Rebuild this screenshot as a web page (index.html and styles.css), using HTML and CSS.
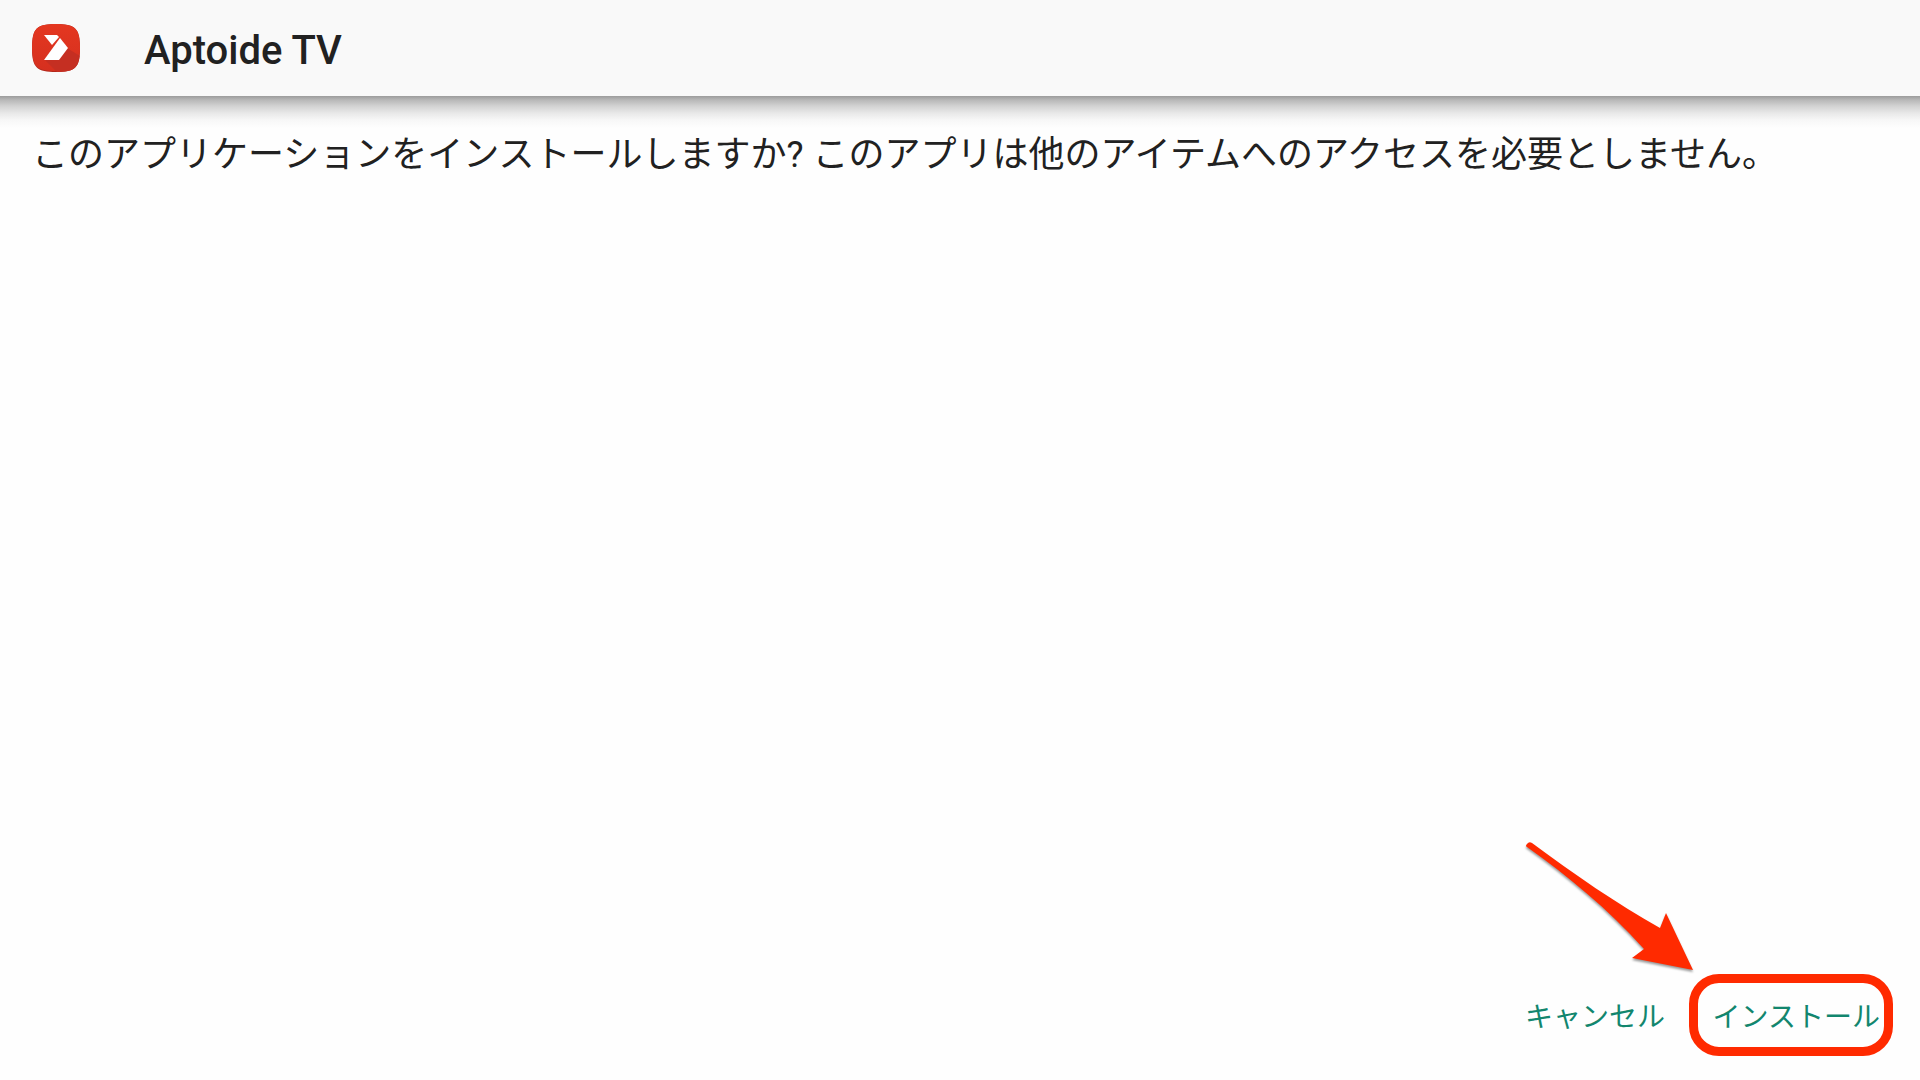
FILE: index.html
```html
<!DOCTYPE html>
<html lang="ja">
<head>
    <meta charset="UTF-8">
    <meta name="viewport" content="width=device-width, initial-scale=1.0">
    <title>Aptoide TV</title>
    <link rel="stylesheet" href="styles.css">
</head>
<body>
    <header>
        <svg class="app-icon" viewBox="0 0 48 48" aria-hidden="true">
            <defs>
                <linearGradient id="red" x1="0" y1="0" x2="0" y2="1">
                    <stop offset="0" stop-color="#e43720"/>
                    <stop offset="1" stop-color="#d5301f"/>
                </linearGradient>
                <clipPath id="tile">
                    <path d="M24 0C43 0 48 4 48 24S43 48 24 48 0 44 0 24 5 0 24 0Z"/>
                </clipPath>
            </defs>
            <g clip-path="url(#tile)">
                <rect width="48" height="48" fill="#b3281b"/>
                <path d="M24 0C43 0 48 4 48 23S43 47 24 47 0 43 0 23 5 0 24 0Z" fill="url(#red)"/>
                <path d="M35 24L48 32V48H25L13 36H27Z" fill="#c52f22"/>
            </g>
            <path d="M12 11H25L27 13L20 21Z" fill="#fff"/>
            <path d="M28 14L36 24L27 36H12Z" fill="#fff"/>
        </svg>
        <h1>Aptoide TV</h1>
    </header>

    <main>
        <p>このアプリケーションをインストールしますか? このアプリは他のアイテムへのアクセスを必要としません。</p>
    </main>

    <footer>
        <button type="button">キャンセル</button>
        <div class="highlight">
            <button type="button">インストール</button>
            <svg class="arrow" viewBox="0 0 170 134" aria-hidden="true">
                <path d="M4 5Q6 2 9 4C52 36 93 64 137 89L143 74L170 131L109 119L121 110C84 69 46 38 4 8Q2 7 4 5Z" fill="#ff2a00"/>
            </svg>
        </div>
    </footer>
</body>
</html>
```

FILE: styles.css
```css
* { box-sizing: border-box; }

body {
    font-family: Roboto, "Noto Sans CJK JP", sans-serif;
    margin: 0;
    min-height: 100vh;
    display: flex;
    flex-direction: column;
    background-color: #fefefe;
    color: #212121;
}

header {
    display: flex;
    align-items: center;
    gap: 64px;
    height: 96px;
    padding: 0 32px;
    background-color: #f9f9f9;
}
.app-icon { width: 48px; height: 48px; }
h1 { margin: 0; padding-top: 6px; font-size: 40px; line-height: 48px; font-weight: 500; }

/* shadow under the header */
main {
    flex: 1;
    padding: 31px 32px;
    background: linear-gradient(#9c9c9c 0, #b8b8b8 4px, #d2d2d2 10px, #e8e8e8 17px, #f7f7f7 24px, #fefefe 32px) no-repeat top / 100% 32px;
}
main p { margin: 0; font-size: 36px; line-height: 56px; }

footer {
    display: flex;
    justify-content: flex-end;
    align-items: center;
    gap: 24px;
    padding: 0 27px 24px;
}
button {
    font-family: inherit;
    font-size: 28px;
    line-height: 40px;
    padding: 6px 0 0;
    border: 0;
    background: none;
    color: #12866e;
    cursor: pointer;
}

.highlight {
    position: relative;
    display: flex;
    align-items: center;
    justify-content: flex-end;
    width: 204px;
    height: 82px;
    padding-right: 4px;
    border: 9px solid #ff2a00;
    border-radius: 30px;
}
.arrow {
    position: absolute;
    right: 191px;
    bottom: 74px;
    width: 170px;
    height: 134px;
    overflow: visible;
    filter: drop-shadow(0 2px 1px rgba(0, 0, 0, 0.4));
}
```
